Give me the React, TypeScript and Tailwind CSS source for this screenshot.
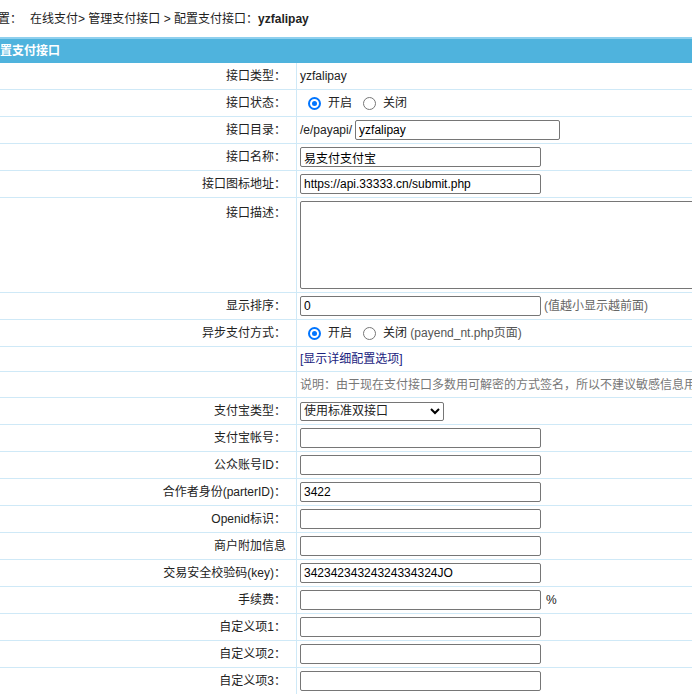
const F = { fontFamily: '"Liberation Sans","Noto Sans CJK SC",sans-serif' };

function Input({ value = "", w = "w-[241px]" }: { value?: string; w?: string }) {
  return (
    <input
      readOnly
      value={value}
      className={`h-[20px] ${w} border border-[#767676] rounded-[2px] bg-white px-[3px] text-[12px] text-black outline-none`}
      style={F}
    />
  );
}

function Radio({ on }: { on?: boolean }) {
  return on ? (
    <span className="inline-block ml-[8px] mr-[4px] w-[13px] h-[13px] rounded-full border-2 border-[#0075ff] bg-white p-[2px]">
      <span className="block w-full h-full rounded-full bg-[#0075ff]" />
    </span>
  ) : (
    <span className="inline-block ml-[6px] mr-[4px] w-[13px] h-[13px] rounded-full border border-[#767676] bg-white" />
  );
}

function Row({ label, h = "h-[27px]", children }: { label?: string; h?: string; children?: React.ReactNode }) {
  return (
    <div className={`flex ${h} border-b border-[#cfe9f7]`}>
      <div className="w-[311px] shrink-0 flex items-center justify-end pr-[10px] border-r border-[#cfe9f7] text-[#222]">{label}</div>
      <div className="flex-1 flex items-center pl-[3px] gap-[3px] whitespace-nowrap text-[#222]">{children}</div>
    </div>
  );
}

export default function App() {
  return (
    <div className="w-[692px] h-[694px] overflow-hidden bg-white text-[12px]" style={F}>
      <div className="ml-[-14px] w-[720px]">
        <div className="h-[37px] flex items-center text-[#222]">
          <span>位置：</span>
          <span className="ml-[8px]">在线支付&gt; 管理支付接口 &gt; 配置支付接口：</span>
          <b>yzfalipay</b>
        </div>
        <div className="h-[26px] bg-[#4fb3dd] border-t-2 border-[#8fd0ee] flex items-center pl-[2px] text-white font-bold">配置支付接口</div>
        <Row label="接口类型："><span>yzfalipay</span></Row>
        <Row label="接口状态："><Radio on /><span className="mr-[2px]">开启</span><Radio /><span>关闭</span></Row>
        <Row label="接口目录："><span>/e/payapi/</span><Input value="yzfalipay" w="w-[205px]" /></Row>
        <Row label="接口名称："><Input value="易支付支付宝" /></Row>
        <Row label="接口图标地址："><Input value="https://api.33333.cn/submit.php" /></Row>
        <div className="flex h-[95px] border-b border-[#cfe9f7]">
          <div className="w-[311px] shrink-0 flex justify-end pt-[6px] pr-[10px] border-r border-[#cfe9f7] text-[#222]">接口描述：</div>
          <div className="flex-1 pl-[3px] pt-[3px]">
            <div className="h-[88px] w-[420px] border border-[#767676] rounded-[2px] bg-white" />
          </div>
        </div>
        <Row label="显示排序："><Input value="0" /><span className="text-[#666]">(值越小显示越前面)</span></Row>
        <Row label="异步支付方式："><Radio on /><span className="mr-[2px]">开启</span><Radio /><span>关闭 <span className="text-[#555]">(payend_nt.php页面)</span></span></Row>
        <Row h="h-[25px]"><span className="text-[#1a237e]">[显示详细配置选项]</span></Row>
        <Row h="h-[26px]"><span className="text-[#777]">说明：由于现在支付接口多数用可解密的方式签名，所以不建议敏感信息用</span></Row>
        <Row label="支付宝类型：">
          <div className="h-[19px] w-[144px] border border-[#767676] rounded-[2px] flex items-center justify-between px-[3px]">
            <span>使用标准双接口</span>
            <svg width="10" height="7" viewBox="0 0 10 7"><path d="M1 1l4 4 4-4" stroke="#000" strokeWidth="2" fill="none" /></svg>
          </div>
        </Row>
        <Row label="支付宝帐号："><Input /></Row>
        <Row label="公众账号ID："><Input /></Row>
        <Row label="合作者身份(parterID)："><Input value="3422" /></Row>
        <Row label="Openid标识："><Input /></Row>
        <Row label="商户附加信息"><Input /></Row>
        <Row label="交易安全校验码(key)："><Input value="34234234324324334324JO" /></Row>
        <Row label="手续费："><Input /><span className="ml-[2px]">%</span></Row>
        <Row label="自定义项1："><Input /></Row>
        <Row label="自定义项2："><Input /></Row>
        <Row label="自定义项3："><Input /></Row>
      </div>
    </div>
  );
}
